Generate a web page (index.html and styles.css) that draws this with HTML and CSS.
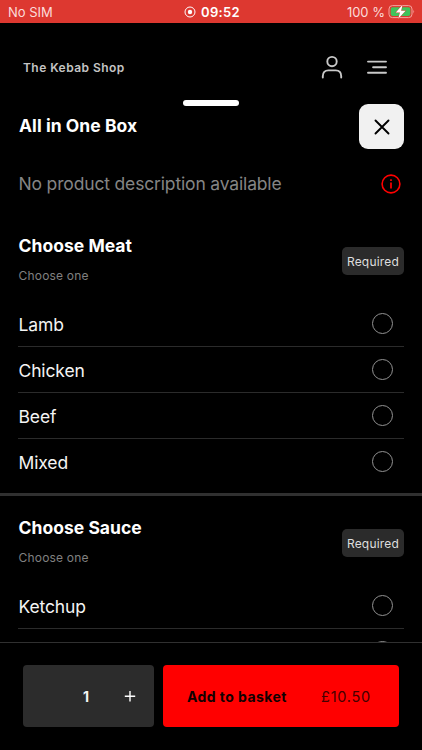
FILE: index.html
```html
<!DOCTYPE html>
<html lang="en">
<head>
<meta charset="utf-8">
<meta name="viewport" content="width=device-width, initial-scale=1">
<title>The Kebab Shop</title>
<link rel="stylesheet" href="styles.css">
</head>
<body>
<div class="app">
  <div class="status">
    <span class="carrier">No SIM</span>
    <span class="clock">
      <svg width="12" height="12" viewBox="0 0 12 12"><circle cx="6" cy="6" r="5" fill="none" stroke="#fff" stroke-width="1"/><circle cx="6" cy="6" r="2.2" fill="#fff"/></svg>
      <b>09:52</b>
    </span>
    <span class="power">
      <span class="percent">100 %</span>
      <svg width="28" height="16" viewBox="0 0 28 16"><rect x="1" y="1.6" width="23" height="12" rx="3.4" fill="none" stroke="#f5a39e"/><rect x="2.7" y="3.3" width="19.6" height="8.6" rx="1.8" fill="#3fc35b"/><path d="M25.4 5.8q1.6 1.8 0 3.6z" fill="#f5a39e"/><path d="M14.6 .8 7.8 8.4h4.2L10.2 14.8l7.4-8.1h-4.5z" fill="#fff" stroke="#dd3830" stroke-width=".8" paint-order="stroke"/></svg>
    </span>
  </div>
  <header class="header">
    <span class="shop">The Kebab Shop</span>
    <svg class="user" width="22" height="24" viewBox="0 0 22 24" fill="none" stroke="#c9c9c9" stroke-width="1.9" stroke-linecap="round"><circle cx="11" cy="6.6" r="4.7"/><path d="M1.8 22.6v-1.4c0-3.7 2.1-5.8 5.5-5.8h7.4c3.4 0 5.5 2.1 5.5 5.8v1.4"/></svg>
    <svg class="menu" width="20" height="16" viewBox="0 0 20 16" fill="none" stroke="#c9c9c9" stroke-width="1.9" stroke-linecap="round"><path d="M1 2.6h18M6.1 8.2H19M1 13.7h18"/></svg>
  </header>
  <div class="handle"></div>
  <main class="sheet">
    <div class="title-row">
      <h1 class="title">All in One Box</h1>
      <button class="close" aria-label="Close"><svg width="16" height="16" viewBox="0 0 16 16" fill="none" stroke="#000" stroke-width="1.9" stroke-linecap="round"><path d="m1.5 1.5 13 13M14.5 1.5l-13 13"/></svg></button>
    </div>
    <div class="description">
      <p class="description-text">No product description available</p>
      <svg width="20" height="20" viewBox="0 0 20 20" fill="none" stroke="#f00" stroke-width="1.6"><circle cx="10" cy="10" r="8.9"/><path d="M10 8.5v6" stroke-width="1.7"/><path d="M10 5.3v1.7" stroke-width="1.7"/></svg>
    </div>
    <section class="group">
      <div class="group-head">
        <div><h2 class="group-title">Choose Meat</h2><p class="hint">Choose one</p></div>
        <span class="badge">Required</span>
      </div>
      <ul class="options">
        <li class="option"><span class="name">Lamb</span><i class="radio"></i></li>
        <li class="option"><span class="name">Chicken</span><i class="radio"></i></li>
        <li class="option"><span class="name">Beef</span><i class="radio"></i></li>
        <li class="option"><span class="name">Mixed</span><i class="radio"></i></li>
      </ul>
    </section>
    <section class="group">
      <div class="group-head">
        <div><h2 class="group-title">Choose Sauce</h2><p class="hint">Choose one</p></div>
        <span class="badge">Required</span>
      </div>
      <ul class="options">
        <li class="option"><span class="name">Ketchup</span><i class="radio"></i></li>
        <li class="option"><span class="name"></span><i class="radio"></i></li>
      </ul>
    </section>
  </main>
  <footer class="footer">
    <div class="stepper">
      <span></span>
      <b class="count">1</b>
      <svg class="plus" width="12" height="12" viewBox="0 0 12 12" stroke="#fff" stroke-width="1.4"><path d="M6 1.1v10.4M.8 6.3h10.4"/></svg>
    </div>
    <button class="add"><b class="add-label">Add to basket</b><span class="price">£10.50</span></button>
  </footer>
</div>
</body>
</html>
```
FILE: styles.css
```css
* { box-sizing: border-box; margin: 0; padding: 0; }
body { background: #000; color: #f4f4f4; font-family: Inter, "Liberation Sans", sans-serif; overflow: hidden; }
svg { display: block; flex: none; }
button { border: 0; font: inherit; }
.app { width: 422px; height: 750px; display: flex; flex-direction: column; }

.status { flex: none; height: 23px; background: #dd3830; display: grid; grid-template-columns: 1fr auto 1fr; align-items: center; padding: 1px 6px 0 8px; font-size: 13px; line-height: 16px; color: #fbdcda; }
.clock { display: flex; align-items: center; gap: 5px; color: #fff; }
.clock b { font-weight: 600; letter-spacing: .35px; }
.power { display: flex; align-items: center; justify-content: flex-end; gap: 3px; }

.header { flex: none; height: 77px; display: flex; align-items: center; padding: 11px 35px 0 23px; }
.shop { margin-right: auto; font-size: 12px; font-weight: 600; letter-spacing: .45px; color: #c4c4c4; }
.user { margin-right: 24px; }
.handle { flex: none; width: 56px; height: 5.5px; margin: 0 0 -1.5px 183px; border-radius: 3px; background: #fff; }

.sheet { flex: 1; min-height: 0; overflow: hidden; }
.title-row { height: 45px; display: flex; align-items: center; justify-content: space-between; padding: 0 18px 0 19px; }
.title { font-size: 17.5px; font-weight: 700; line-height: 22px; letter-spacing: .05px; margin-bottom: 2px; color: #fff; }
.close { width: 45px; height: 45px; border-radius: 9px; background: #f1f1f1; display: grid; place-items: center; }
.description { height: 65px; display: flex; align-items: center; justify-content: space-between; padding: 4px 21px 0 18.5px; }
.description-text { font-size: 17.5px; line-height: 22px; letter-spacing: -.16px; color: #858585; }

.group { height: 282px; border-bottom: 3px solid #303030; }
.group-head { height: 87px; display: flex; justify-content: space-between; padding: 20px 18px 0 18.5px; }
.group-title { padding-top: 1px; font-size: 17.5px; font-weight: 700; line-height: 22px; letter-spacing: .03px; color: #fff; }
.hint { margin-top: 10px; font-size: 12px; line-height: 18px; letter-spacing: .2px; color: #808080; }
.badge { width: 62px; height: 28px; margin-top: 13px; border-radius: 5px; background: #2b2b2b; display: grid; place-items: center; font-size: 12px; letter-spacing: .2px; color: #dedede; }
.options { list-style: none; padding: 0 18px; }
.option { height: 46px; display: flex; align-items: center; justify-content: space-between; padding: 0 11px 0 .5px; border-bottom: 1px solid #2b2b2b; }
.option:last-child { border-bottom-color: transparent; }
.name { padding-top: 2px; font-size: 17.5px; line-height: 22px; letter-spacing: -.13px; }
.radio { width: 21px; height: 21px; border: 1px solid #929292; border-radius: 50%; }

.footer { flex: none; height: 108px; border-top: 1px solid #303030; display: flex; gap: 9px; padding: 22.4px 23px 0; }
.stepper { width: 131px; height: 62px; border-radius: 4px; background: #2c2c2c; display: grid; grid-template-columns: 42px 42px 45px; place-items: center; }
.count { font-size: 14px; font-weight: 700; }
.add { width: 236px; height: 62px; border-radius: 4px; background: #f00; display: flex; align-items: center; justify-content: space-between; padding: 0 28px 0 24px; font-size: 14px; }
.add-label { font-weight: 700; color: #100; letter-spacing: .43px; }
.price { color: #400; font-size: 14.5px; letter-spacing: .75px; }
```
